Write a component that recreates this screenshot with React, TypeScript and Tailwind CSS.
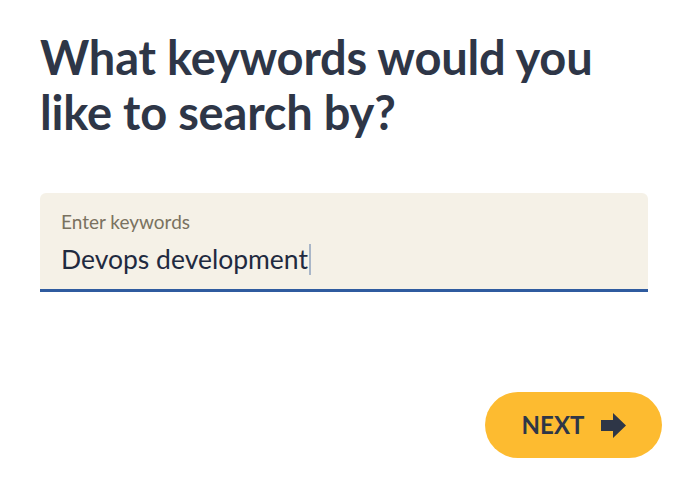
export default function App() {
  return (
    <div className="min-h-[479px] w-[688px] bg-white font-['Lato',sans-serif] text-[#2e3647]">
      <div className="pl-10 pr-[26px] pt-[30px]">
        <h1 className="pr-[14px] text-[47px] font-bold leading-[55px] tracking-[-0.2px]">
          What keywords would you like to search by?
        </h1>

        <div className="mt-[53px] w-[608px] rounded-t-md border-b-[3px] border-[#2f5b9f] bg-[#f5f1e7] px-[21px] pt-[17px] pb-[12px]">
          <div className="text-[19px] leading-[24px] text-[#7a7260]">Enter keywords</div>
          <div className="mt-[8px] flex items-center text-[26.5px] leading-[35px] text-[#1f2a40]">
            <span>Devops development</span>
            <span className="ml-px h-[31px] w-[2px] bg-[#a9b6c8]" />
          </div>
        </div>

        <div className="mt-[100px] flex justify-end">
          <button className="flex h-[66px] w-[177px] items-center justify-center gap-[17px] rounded-full bg-[#fdbb30] pl-px text-[24px] font-bold text-[#2e3647]">
            <span>NEXT</span>
            <svg width="25" height="25" viewBox="0 0 25 25" fill="#2e3647">
              <path d="M0 7h12V0l13 12.5L12 25v-7H0z" />
            </svg>
          </button>
        </div>
      </div>
    </div>
  );
}
